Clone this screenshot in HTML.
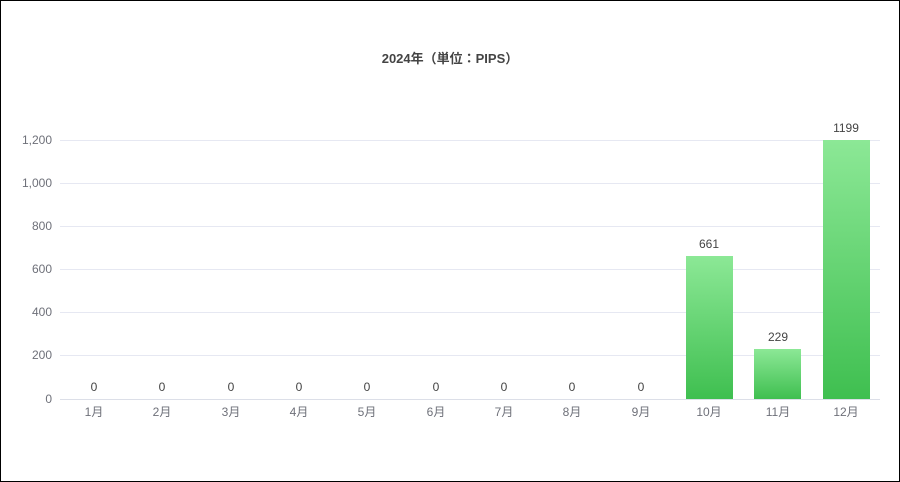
<!DOCTYPE html><html><head><meta charset="utf-8"><style>
body{margin:0;width:900px;height:482px;overflow:hidden;background:#fff}
.f{position:absolute;left:0;top:0;width:898px;height:480px;border:1px solid #000}
</style></head><body><div class="f"></div>
<svg width="900" height="482" style="position:absolute;left:0;top:0" font-family="'Liberation Sans','Noto Sans CJK JP',sans-serif">
<defs><linearGradient id="g" x1="0" y1="0" x2="0" y2="1"><stop offset="0" stop-color="#8ce896"/><stop offset="1" stop-color="#3fbf50"/></linearGradient></defs>
<text x="450" y="63" text-anchor="middle" font-size="13" font-weight="bold" fill="#444">2024年（単位：PIPS）</text>
<g stroke="#e6e8f2" stroke-width="1">
<line x1="60" x2="880" y1="140.5" y2="140.5"/><line x1="60" x2="880" y1="183.5" y2="183.5"/><line x1="60" x2="880" y1="226.5" y2="226.5"/><line x1="60" x2="880" y1="269.5" y2="269.5"/><line x1="60" x2="880" y1="312.5" y2="312.5"/><line x1="60" x2="880" y1="355.5" y2="355.5"/><line x1="60" x2="880" y1="399.5" y2="399.5" stroke="#dcdfe8"/>
</g>
<g font-size="12" fill="#6e7079" text-anchor="end">
<text x="52" y="144">1,200</text><text x="52" y="187">1,000</text><text x="52" y="230">800</text><text x="52" y="273">600</text><text x="52" y="316">400</text><text x="52" y="359">200</text><text x="52" y="403">0</text>
</g>
<rect x="686" y="256" width="47" height="143" fill="url(#g)"/>
<rect x="754" y="349" width="47" height="50" fill="url(#g)"/>
<rect x="823" y="140" width="47" height="259" fill="url(#g)"/>
<g font-size="12" fill="#444" text-anchor="middle">
<text x="94" y="391">0</text><text x="162" y="391">0</text><text x="231" y="391">0</text><text x="299" y="391">0</text><text x="367" y="391">0</text><text x="436" y="391">0</text><text x="504" y="391">0</text><text x="572" y="391">0</text><text x="641" y="391">0</text>
<text x="709" y="248">661</text><text x="778" y="341">229</text><text x="846" y="132">1199</text>
</g>
<g font-size="12" fill="#6e7079" text-anchor="middle">
<text x="94" y="416">1月</text><text x="162" y="416">2月</text><text x="231" y="416">3月</text><text x="299" y="416">4月</text><text x="367" y="416">5月</text><text x="436" y="416">6月</text><text x="504" y="416">7月</text><text x="572" y="416">8月</text><text x="641" y="416">9月</text><text x="709" y="416">10月</text><text x="778" y="416">11月</text><text x="846" y="416">12月</text>
</g>
</svg></body></html>
